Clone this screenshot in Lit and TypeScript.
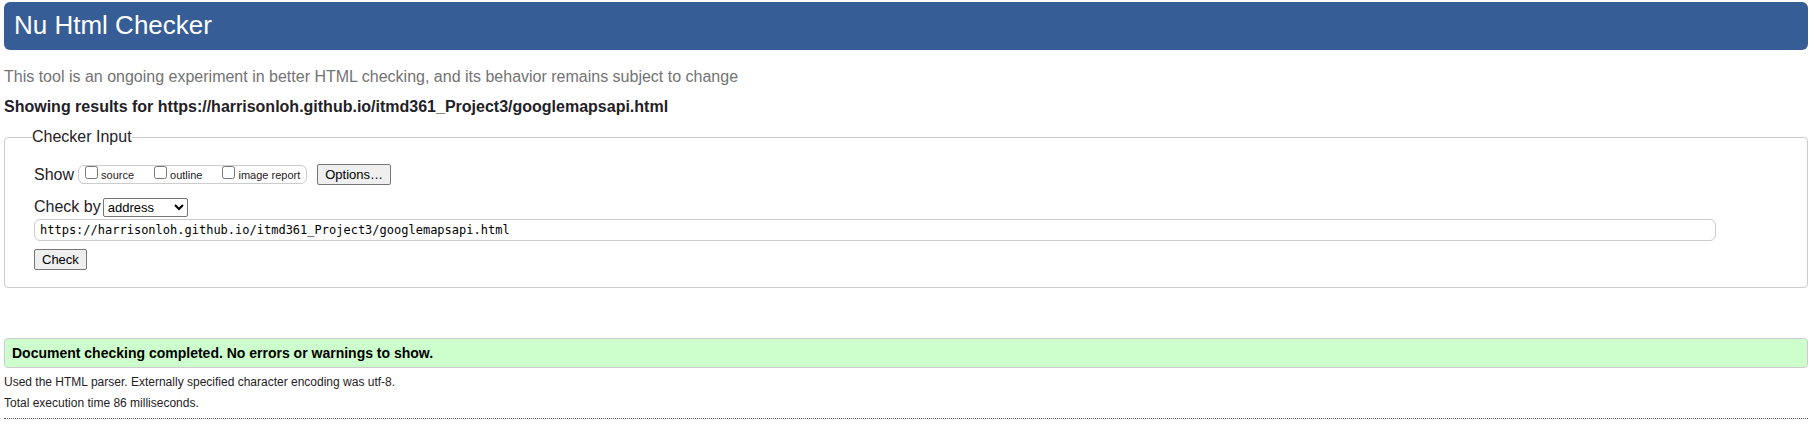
import { LitElement, html, css } from "lit";
import { customElement, state } from "lit/decorators.js";

const DOC_URL = "https://harrisonloh.github.io/itmd361_Project3/googlemapsapi.html";

@customElement("app-root")
export class AppRoot extends LitElement {
  static styles = css`
    :host {
      display: block;
      padding: 2px 6px 8px 4px;
      background: #fff;
      color: #1f2126;
      font: 16px/20px "Liberation Sans", Arial, sans-serif;
    }
    .banner {
      box-sizing: border-box;
      height: 48px;
      padding: 8px 10px;
      border-radius: 6px;
      background: #365d95;
    }
    .title {
      margin: 0;
      color: #fff;
      font-size: 26px;
      line-height: 30px;
      font-weight: 400;
    }
    .tagline {
      margin: 17px 0 10px;
      color: #737373;
    }
    .heading {
      margin: 0 0 11px;
      font-size: 16px;
      line-height: 20px;
      font-weight: 700;
    }
    .panel {
      min-width: 0;
      margin: 0;
      padding: 26px 21px 17px 27px;
      border: 1px solid #ccc;
      border-radius: 4px;
    }
    .legend {
      padding: 0;
      line-height: 18px;
    }
    .fields {
      display: flex;
      flex-direction: column;
      align-items: flex-start;
      margin-left: 2px;
    }
    .row {
      display: flex;
      align-items: center;
    }
    .show {
      margin: -8px 0 12px;
    }
    .checks {
      display: flex;
      gap: 20px;
      box-sizing: border-box;
      height: 19px;
      margin: 0 10px 0 4px;
      padding: 0 6px;
      border: 1px solid #ccc;
      border-radius: 6px;
    }
    .check {
      display: flex;
      align-items: flex-start;
      gap: 3px;
      font-size: 11px;
      line-height: 18px;
    }
    .check input {
      width: 13px;
      height: 13px;
      margin: 0;
    }
    button {
      box-sizing: border-box;
      height: 21px;
      padding: 0 7px;
      border: 1px solid #767676;
      border-radius: 2px;
      background: #efefef;
      color: #000;
      font: 13px/18px "Liberation Sans", Arial, sans-serif;
    }
    .by {
      gap: 2px;
      margin-bottom: 2px;
    }
    select {
      width: 85px;
      height: 19px;
      border: 1px solid #767676;
      border-radius: 2px;
      background-color: #fff;
      color: #000;
      font: 13px "Liberation Sans", Arial, sans-serif;
    }
    .url {
      box-sizing: border-box;
      width: 96%;
      height: 22px;
      margin: 0 0 8px;
      padding: 2px 5px;
      border: 1px solid #ccc;
      border-radius: 6px;
      background: #fff;
      color: #000;
      font: 12px "DejaVu Sans Mono", Consolas, monospace;
    }
    .success {
      margin: 50px 0 4px;
      padding: 4px 7px;
      border: 1px solid #ccc;
      border-radius: 4px;
      background: #cfc;
      color: #000;
      font-size: 14px;
      font-weight: 700;
    }
    .details {
      margin: 0 0 1px;
      font-size: 12px;
    }
    .rule {
      margin: 5px 0 0;
      border: 0;
      border-top: 1px dotted #555;
    }
  `;

  @state() private address = DOC_URL;

  private options = [
    { id: "source", label: "source" },
    { id: "outline", label: "outline" },
    { id: "image-report", label: "image report" },
  ];

  render() {
    return html`
      <header class="banner"><h1 class="title">Nu Html Checker</h1></header>
      <p class="tagline">This tool is an ongoing experiment in better HTML checking, and its behavior remains subject to change</p>
      <h2 class="heading">Showing results for ${DOC_URL}</h2>
      <form @submit=${(e: Event) => e.preventDefault()}>
        <fieldset class="panel">
          <legend class="legend">Checker Input</legend>
          <div class="fields">
            <div class="row show">
              <span>Show</span>
              <div class="checks">
                ${this.options.map(
                  (o) => html`<label class="check" for=${o.id}><input type="checkbox" id=${o.id} />${o.label}</label>`
                )}
              </div>
              <button type="button">Options…</button>
            </div>
            <div class="row by">
              <label for="method">Check by</label>
              <select id="method">
                <option>address</option>
                <option>file upload</option>
                <option>text input</option>
              </select>
            </div>
            <input
              class="url"
              type="text"
              aria-label="Address"
              spellcheck="false"
              .value=${this.address}
              @input=${(e: Event) => (this.address = (e.target as HTMLInputElement).value)}
            />
            <button type="submit">Check</button>
          </div>
        </fieldset>
      </form>
      <p class="success">Document checking completed. No errors or warnings to show.</p>
      <p class="details">Used the HTML parser. Externally specified character encoding was utf-8.</p>
      <p class="details">Total execution time 86 milliseconds.</p>
      <hr class="rule" />
    `;
  }
}
